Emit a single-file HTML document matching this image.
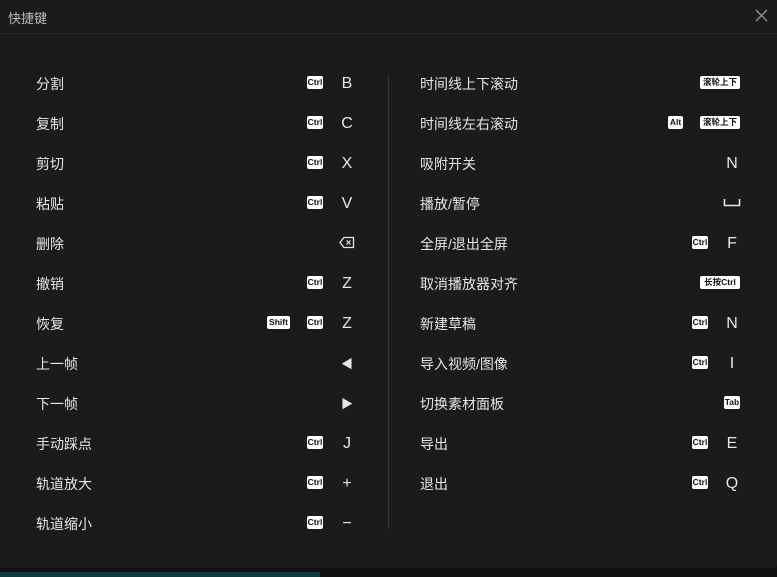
<!DOCTYPE html>
<html><head><meta charset="utf-8"><style>
body{margin:0;width:777px;height:577px;background:#111;overflow:hidden;font-family:"Liberation Sans","Noto Sans CJK SC",sans-serif;position:relative}
.win{position:absolute;left:0;top:0;width:777px;height:568px;background:#1b1b1b;border-radius:0 0 4px 4px}
.hd{position:absolute;left:8px;top:8px;font-size:13px;color:#bbb}
.line{position:absolute;left:0;top:33px;width:777px;height:1px;background:#262626}
.div{position:absolute;left:388px;top:75px;width:1px;height:454px;background:#333}
.r{position:absolute;font-size:14px;color:#e6e6e6;line-height:16px}
.k{position:absolute;font-size:16px;color:#e6e6e6;transform:translateX(-50%);line-height:16px}
.b{position:absolute;height:13px;background:#fff;color:#111;font-weight:bold;font-size:8.5px;line-height:13px;text-align:center;border-radius:2px}
.teal{position:absolute;left:0;top:572px;width:320px;height:5px;background:#0e3a3d}
</style></head><body>
<div class="win">
<div class="hd">快捷键</div><div class="line"></div><div class="div"></div>
<svg style="position:absolute;left:755px;top:9px" width="13" height="13"><path d="M1 1L12 12M12 1L1 12" stroke="#999" stroke-width="1.3"/></svg>
<svg style="position:absolute;left:339px;top:236px" width="16" height="13"><path d="M5 1.5H14.5V11.5H5L1 6.5Z" fill="none" stroke="#e6e6e6" stroke-width="1.3"/><path d="M7.5 4.5L11.5 8.5M11.5 4.5L7.5 8.5" stroke="#e6e6e6" stroke-width="1.2"/></svg>
<svg style="position:absolute;left:723px;top:198px" width="18" height="9"><path d="M1.5 1V7.5H16.5V1" fill="none" stroke="#e6e6e6" stroke-width="1.6"/></svg>
</div>
<div class="teal"></div>
<div id="c"></div>
<script>
var L=[["分割",["Ctrl"],"B"],["复制",["Ctrl"],"C"],["剪切",["Ctrl"],"X"],["粘贴",["Ctrl"],"V"],["删除",[],"-"],["撤销",["Ctrl"],"Z"],["恢复",["Shift","Ctrl"],"Z"],["上一帧",[],"◀"],["下一帧",[],"▶"],["手动踩点",["Ctrl"],"J"],["轨道放大",["Ctrl"],"+"],["轨道缩小",["Ctrl"],"−"]];
var R=[["时间线上下滚动",["滚轮上下"],""],["时间线左右滚动",["Alt","滚轮上下"],""],["吸附开关",[],"N"],["播放/暂停",[],"-"],["全屏/退出全屏",["Ctrl"],"F"],["取消播放器对齐",["长按Ctrl"],""],["新建草稿",["Ctrl"],"N"],["导入视频/图像",["Ctrl"],"I"],["切换素材面板",["Tab"],""],["导出",["Ctrl"],"E"],["退出",["Ctrl"],"Q"]];
var W={"Ctrl":16,"Shift":23,"Alt":15,"滚轮上下":40,"长按Ctrl":40,"Tab":16};
var h="";
function put(list,tx,kx){list.forEach(function(r,i){var y=84+40*i;
h+='<div class="r" style="left:'+tx+'px;top:'+(y-8)+'px">'+r[0]+'</div>';
if(r[2]&&r[2]!="-")h+='<div class="k" style="left:'+kx+'px;top:'+(y-8)+'px;'+(r[2]=="◀"||r[2]=="▶"?"font-size:12px;":"")+'">'+r[2]+'</div>';
var right=r[2]?kx-24:kx+8;var bs=r[1].slice().reverse();
bs.forEach(function(b){var w=W[b];h+='<div class="b" style="left:'+(right-w)+'px;top:'+(y-8)+'px;width:'+w+'px">'+b+'</div>';right-=w+17;});
});}
put(L,36,347);put(R,420,732);
document.getElementById("c").innerHTML=h;
</script>
</body></html>
